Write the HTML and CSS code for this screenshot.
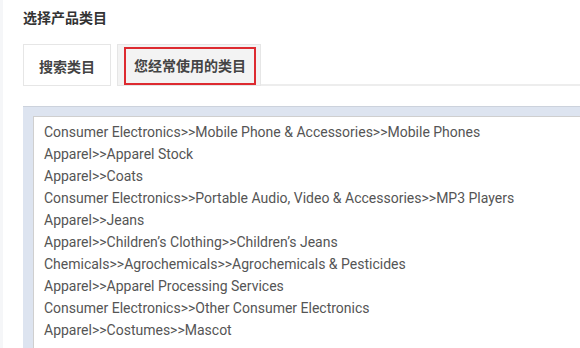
FILE: index.html
```html
<!DOCTYPE html>
<html lang="zh">
<head>
<meta charset="utf-8">
<link rel="stylesheet" href="styles.css">
</head>
<body>
<div class="page">
  <div class="title">选择产品类目</div>
  <div class="tabs">
    <div class="tab">搜索类目</div>
    <div class="tab tab-alt"><div class="tab-hl">您经常使用的类目</div></div>
    <div class="tab-rest"></div>
  </div>
  <div class="panel">
    <div class="list">
      <div class="item">Consumer Electronics&gt;&gt;Mobile Phone &amp; Accessories&gt;&gt;Mobile Phones</div>
      <div class="item">Apparel&gt;&gt;Apparel Stock</div>
      <div class="item">Apparel&gt;&gt;Coats</div>
      <div class="item">Consumer Electronics&gt;&gt;Portable Audio, Video &amp; Accessories&gt;&gt;MP3 Players</div>
      <div class="item">Apparel&gt;&gt;Jeans</div>
      <div class="item">Apparel&gt;&gt;Children’s Clothing&gt;&gt;Children’s Jeans</div>
      <div class="item">Chemicals&gt;&gt;Agrochemicals&gt;&gt;Agrochemicals &amp; Pesticides</div>
      <div class="item">Apparel&gt;&gt;Apparel Processing Services</div>
      <div class="item">Consumer Electronics&gt;&gt;Other Consumer Electronics</div>
      <div class="item">Apparel&gt;&gt;Costumes&gt;&gt;Mascot</div>
    </div>
  </div>
</div>
</body>
</html>
```
FILE: styles.css
```css
html, body {
  margin: 0;
  padding: 0;
  background: #fff;
}
body {
  width: 580px;
  height: 348px;
  overflow: hidden;
  font-family: Roboto, "Noto Sans CJK SC", sans-serif;
}
.page {
  border-left: 3px solid #f5f6f8;
  padding-left: 20px;
  height: 348px;
  box-sizing: border-box;
  overflow: hidden;
}
.title {
  padding-top: 8px;
  line-height: 20px;
  font-size: 14px;
  font-weight: 700;
  color: #333;
}
.tabs {
  display: flex;
  align-items: flex-end;
  margin-top: 16px;
  height: 42px;
}
.tab {
  box-sizing: border-box;
  height: 42px;
  width: 88px;
  border: 1px solid #e6e6e6;
  background: #fff;
  font-size: 14px;
  font-weight: 700;
  color: #444;
  display: flex;
  align-items: center;
  justify-content: center;
  padding-top: 2px;
}
.tab-alt {
  width: 144px;
  margin-left: 6px;
  background: #f3f3f3;
  padding: 2px 4px 0 6px;
  align-items: stretch;
}
.tab-hl {
  flex: 1;
  border: 2px solid #dd2a30;
  display: flex;
  align-items: center;
  justify-content: center;
  padding-bottom: 2px;
}
.tab-rest {
  flex: 1;
  height: 42px;
  box-sizing: border-box;
  border-bottom: 2px solid #ededed;
}
.panel {
  box-sizing: border-box;
  margin-top: 20px;
  background: #dde4f0;
  border-top: 1px solid #ccd2dc;
  padding: 9px 0 0 10px;
  height: 242px;
}
.list {
  box-sizing: border-box;
  background: #fff;
  border-top: 1px solid #cfcfcf;
  border-left: 1px solid #cfcfcf;
  padding: 4px 0 0 10px;
  height: 232px;
  overflow: hidden;
}
.item {
  font-size: 14px;
  line-height: 22px;
  color: #555;
  white-space: nowrap;
}
```
